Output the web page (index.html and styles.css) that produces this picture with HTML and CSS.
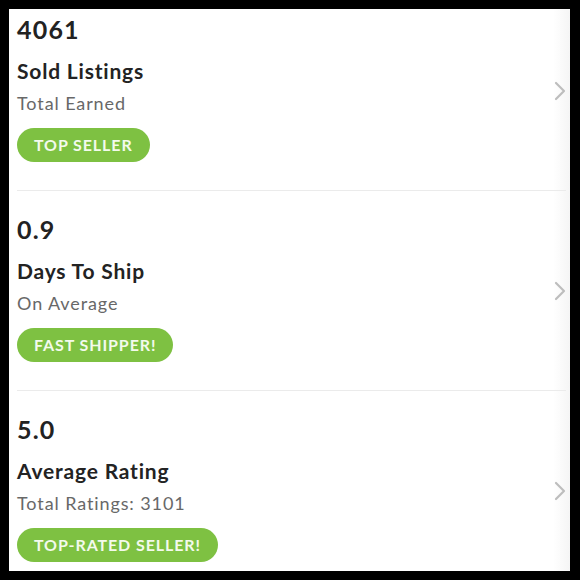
FILE: index.html
```html
<!DOCTYPE html>
<html lang="en">
<head>
<meta charset="utf-8">
<title>Seller Stats</title>
<link rel="stylesheet" href="styles.css">
</head>
<body>
<div class="frame">
  <div class="screen">
    <ul class="list">
      <li class="row">
        <div class="info">
          <div class="value">4061</div>
          <div class="title">Sold Listings</div>
          <div class="sub">Total Earned</div>
          <span class="badge">TOP SELLER</span>
        </div>
        <svg class="chev" viewBox="0 0 12 20" width="12" height="20"><path d="M2 2 L10 10 L2 18" fill="none" stroke="#bdbdbd" stroke-width="2.2" stroke-linecap="round" stroke-linejoin="round"/></svg>
      </li>
      <li class="row">
        <div class="info">
          <div class="value">0.9</div>
          <div class="title">Days To Ship</div>
          <div class="sub">On Average</div>
          <span class="badge">FAST SHIPPER!</span>
        </div>
        <svg class="chev" viewBox="0 0 12 20" width="12" height="20"><path d="M2 2 L10 10 L2 18" fill="none" stroke="#bdbdbd" stroke-width="2.2" stroke-linecap="round" stroke-linejoin="round"/></svg>
      </li>
      <li class="row">
        <div class="info">
          <div class="value">5.0</div>
          <div class="title">Average Rating</div>
          <div class="sub">Total Ratings: 3101</div>
          <span class="badge">TOP-RATED SELLER!</span>
        </div>
        <svg class="chev" viewBox="0 0 12 20" width="12" height="20"><path d="M2 2 L10 10 L2 18" fill="none" stroke="#bdbdbd" stroke-width="2.2" stroke-linecap="round" stroke-linejoin="round"/></svg>
      </li>
    </ul>
  </div>
</div>
</body>
</html>
```
FILE: styles.css
```css
html, body {
  margin: 0;
  padding: 0;
  background: #000;
}
.frame {
  width: 580px;
  height: 580px;
  padding: 9px 10px 9px 9px;
  box-sizing: border-box;
}
.screen {
  height: 562px;
  background: linear-gradient(to right, #fff 0, #fff 97%, #f5f5f5 100%);
  overflow: hidden;
  font-family: "Lato", "Liberation Sans", sans-serif;
}
.list {
  list-style: none;
  margin: -18px 0 0 0;
  padding: 0;
}
.row {
  height: 200px;
  box-sizing: border-box;
  margin: 0 4px 0 8px;
  border-bottom: 1px solid #ebebeb;
  display: flex;
  align-items: center;
  justify-content: space-between;
}
.info {
  display: flex;
  flex-direction: column;
  align-items: flex-start;
  margin-bottom: 6px;
}
.value {
  font-size: 25px;
  font-weight: 700;
  color: #222;
  line-height: 30px;
  letter-spacing: 1.2px;
}
.title {
  margin-top: 14px;
  font-size: 21px;
  font-weight: 700;
  color: #232323;
  line-height: 26px;
  letter-spacing: 0.8px;
}
.sub {
  margin-top: 8px;
  font-size: 18px;
  color: #686868;
  line-height: 22px;
  letter-spacing: 0.9px;
}
.badge {
  margin-top: 14px;
  height: 34px;
  line-height: 34px;
  padding: 0 17px;
  border-radius: 17px;
  background: #7ec142;
  color: #f3faec;
  font-size: 16px;
  font-weight: 700;
  letter-spacing: 0.9px;
}
.chev {
  display: block;
}
```
